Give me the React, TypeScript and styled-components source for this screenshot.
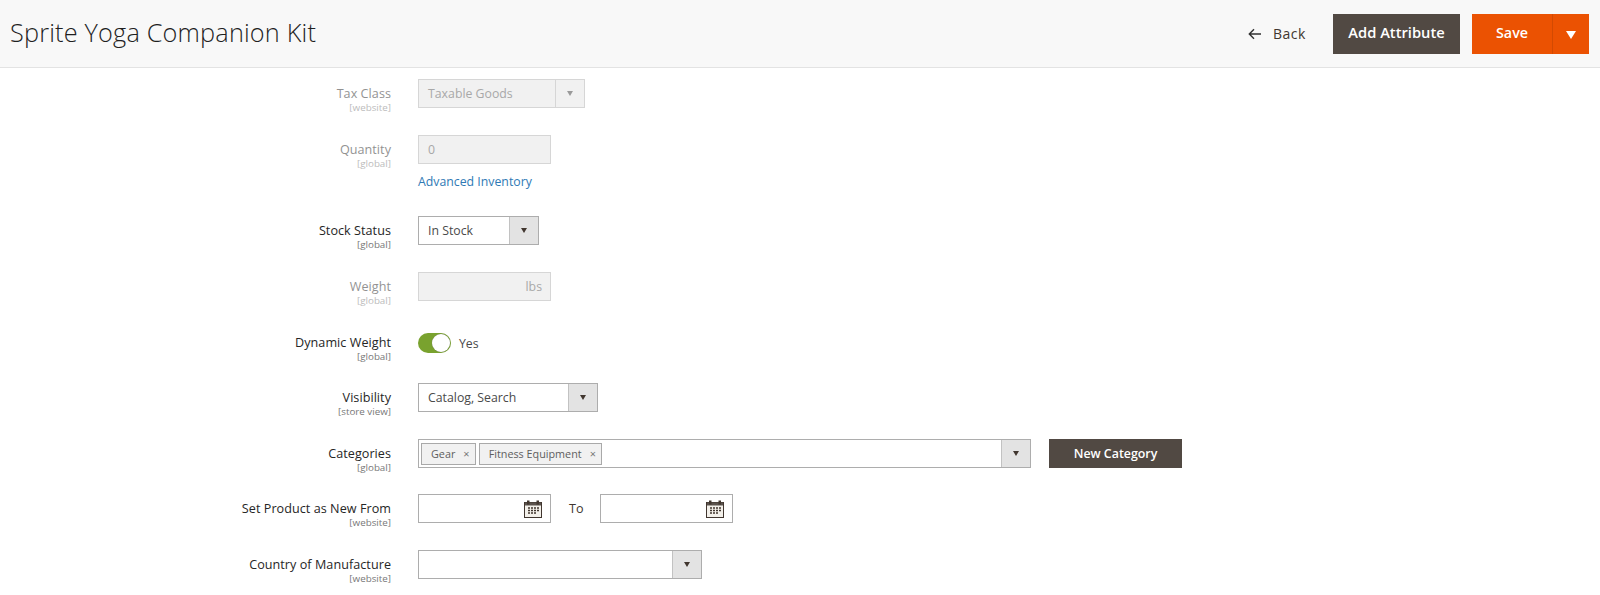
import React from "react";
import styled, { createGlobalStyle } from "styled-components";

const Global = createGlobalStyle`
  html, body { margin: 0; padding: 0; background: #fff; overflow: hidden; }
  body { font-family: "Open Sans", "Liberation Sans", sans-serif; color: #303030; }
`;

const Page = styled.div`
  width: 1600px;
  height: 595px;
  overflow: hidden;
`;

const Header = styled.header`
  box-sizing: border-box;
  background: #f8f8f8;
  border-bottom: 1px solid #e3e3e3;
  display: flex;
  align-items: center;
  padding: 0 11px 0 10px;
  height: 68px;
`;

const Title = styled.h1`
  margin: 0;
  flex: 1;
  font-size: 25.3px;
  font-weight: 300;
  color: #1f1f1f;
  letter-spacing: 0.17px;
  position: relative;
  top: -2px;
`;

const BackLink = styled.span`
  display: flex;
  align-items: center;
  gap: 11px;
  font-size: 14px;
  font-weight: 400;
  letter-spacing: 0.55px;
  color: #41362f;
  margin-right: 27px;
  padding-left: 1px;
`;

const DarkButton = styled.button<{ $w: number; $h: number; $lift?: number }>`
  width: ${(p) => p.$w}px;
  height: ${(p) => p.$h}px;
  background: #514943;
  border: 1px solid #514943;
  color: #fff;
  font-family: inherit;
  font-weight: 600;
  font-size: 14.7px;
  padding: 0 0 ${(p) => p.$lift ?? 0}px;
`;

const SaveGroup = styled.div`
  display: flex;
  height: 40px;
  margin-left: 12px;
  background: #eb5202;
`;

const SaveMain = styled.button`
  width: 80px;
  border: 0;
  background: none;
  color: #fff;
  font-family: inherit;
  font-weight: 600;
  font-size: 14.3px;
  padding: 0 0 2px;
`;

const SaveToggle = styled.button`
  width: 37px;
  border: 0;
  border-left: 1px solid #d24a02;
  background: none;
  padding: 0;
  display: flex;
  align-items: center;
  justify-content: center;
`;

const Form = styled.main`
  padding-top: 11px;
  display: flex;
  flex-direction: column;
`;

const Row = styled.div<{ $gap?: number }>`
  display: grid;
  grid-template-columns: 391px 1fr;
  column-gap: 27px;
  margin-bottom: ${(p) => p.$gap ?? 27}px;
  height: 29px;
`;

const LabelCell = styled.div<{ $disabled?: boolean }>`
  text-align: right;
  opacity: ${(p) => (p.$disabled ? 0.5 : 1)};
  padding-top: 6px;
`;

const LabelText = styled.div`
  font-size: 12.6px;
  font-weight: 400;
  letter-spacing: 0.05px;
  line-height: 17px;
  color: #262626;
`;

const Scope = styled.div`
  font-size: 9.8px;
  line-height: 11px;
  color: #777;
`;

const Control = styled.div`
  display: flex;
  align-items: flex-start;
`;

const Stack = styled.div`
  display: flex;
  flex-direction: column;
`;

const SelectBox = styled.div<{ $w: number; $disabled?: boolean }>`
  width: ${(p) => p.$w}px;
  height: 29px;
  box-sizing: border-box;
  display: flex;
  border: 1px solid ${(p) => (p.$disabled ? "#d6d6d6" : "#adadad")};
  background: ${(p) => (p.$disabled ? "#f1f1f1" : "#fff")};
`;

const SelectValue = styled.div<{ $disabled?: boolean }>`
  flex: 1;
  padding-left: 9px;
  font-size: 12.3px;
  line-height: 27px;
  color: ${(p) => (p.$disabled ? "#a8a8a8" : "#4a4a4a")};
`;

const SelectArrow = styled.div<{ $disabled?: boolean }>`
  width: 28px;
  flex: none;
  display: flex;
  align-items: center;
  justify-content: center;
  background: ${(p) => (p.$disabled ? "#f1f1f1" : "#e3e3e3")};
  border-left: 1px solid ${(p) => (p.$disabled ? "#d6d6d6" : "#c2c2c2")};
`;

const Caret = styled.span<{ $disabled?: boolean }>`
  width: 0;
  height: 0;
  border-left: 3.5px solid transparent;
  border-right: 3.5px solid transparent;
  border-top: 5px solid ${(p) => (p.$disabled ? "#9a9a9a" : "#41362f")};
`;

const SaveCaret = styled.span`
  width: 0;
  height: 0;
  border-left: 5.5px solid transparent;
  border-right: 5.5px solid transparent;
  border-top: 8px solid #fff;
  margin-top: 3px;
`;

const TextBox = styled.div<{ $disabled?: boolean }>`
  width: 133px;
  height: 29px;
  box-sizing: border-box;
  display: flex;
  align-items: center;
  justify-content: space-between;
  padding: 0 8px 0 9px;
  border: 1px solid ${(p) => (p.$disabled ? "#d6d6d6" : "#adadad")};
  background: ${(p) => (p.$disabled ? "#f1f1f1" : "#fff")};
  font-size: 12.3px;
  color: #a8a8a8;
`;

const AddLink = styled.a`
  font-size: 12.3px;
  color: #2f7ab5;
  line-height: 18px;
  margin-top: 9px;
`;

const Toggle = styled.div`
  margin-top: 5px;
  display: flex;
  align-items: center;
  gap: 8px;
  font-size: 12.3px;
  color: #4a4a4a;
`;

const Track = styled.div`
  width: 33px;
  height: 20px;
  border-radius: 10px;
  background: #79a22e;
  display: flex;
  justify-content: flex-end;
`;

const Knob = styled.div`
  width: 18px;
  height: 18px;
  margin: 1px;
  border-radius: 50%;
  background: #fff;
  box-shadow: 0 0 1px #777;
`;

const MultiWrap = styled.div`
  width: 613px;
  height: 29px;
  box-sizing: border-box;
  display: flex;
  border: 1px solid #adadad;
  background: #fff;
`;

const Chips = styled.div`
  flex: 1;
  display: flex;
  align-items: center;
  gap: 3px;
  padding-left: 2px;
`;

const Chip = styled.span`
  height: 22px;
  box-sizing: border-box;
  display: inline-flex;
  align-items: center;
  justify-content: space-between;
  gap: 8px;
  padding: 0 5px 0 9px;
  background: #f1f1f1;
  border: 1px solid #a9a9a9;
  font-size: 10.8px;
  color: #5e5e5e;
`;

const ChipClose = styled.span`
  font-size: 11px;
  color: #777;
  line-height: 1;
`;

const NewButton = styled(DarkButton)`
  margin-left: 18px;
  font-size: 12.4px;
`;

const ToLabel = styled.span`
  font-size: 12.6px;
  line-height: 29px;
  color: #41362f;
  margin: 0 16px 0 18px;
`;

const CalendarIcon = () => (
  <svg width="18" height="18" viewBox="0 0 18 18">
    <rect x="0.5" y="2.5" width="17" height="15" fill="#f3f0ea" stroke="#41362f" />
    <rect x="1" y="2.5" width="16" height="3" fill="#5a524c" />
    <rect x="3" y="0.5" width="2.5" height="4" fill="#41362f" />
    <rect x="12.5" y="0.5" width="2.5" height="4" fill="#41362f" />
    <path
      d="M4 8h2M7 8h2M10 8h2M13 8h2M4 10.5h2M7 10.5h2M10 10.5h2M13 10.5h2M4 13h2M7 13h2M10 13h2"
      stroke="#41362f"
      strokeWidth="1.3"
    />
  </svg>
);

const BackArrow = () => (
  <svg width="14" height="12" viewBox="0 0 14 12" fill="none" stroke="#303030" strokeWidth="1.4">
    <path d="M13 6H1.5M6 1.3 1.3 6 6 10.7" />
  </svg>
);

type FieldProps = { label: string; scope: string; disabled?: boolean; gap?: number; children: React.ReactNode };

const Field = ({ label, scope, disabled, gap, children }: FieldProps) => (
  <Row $gap={gap}>
    <LabelCell $disabled={disabled}>
      <LabelText>{label}</LabelText>
      <Scope>{scope}</Scope>
    </LabelCell>
    <Control>{children}</Control>
  </Row>
);

const Select = ({ w, value, disabled }: { w: number; value: string; disabled?: boolean }) => (
  <SelectBox $w={w} $disabled={disabled}>
    <SelectValue $disabled={disabled}>{value}</SelectValue>
    <SelectArrow $disabled={disabled}>
      <Caret $disabled={disabled} />
    </SelectArrow>
  </SelectBox>
);

export default function App() {
  return (
    <Page>
      <Global />
      <Header>
        <Title>Sprite Yoga Companion Kit</Title>
        <BackLink>
          <BackArrow />
          Back
        </BackLink>
        <DarkButton $w={127} $h={40} $lift={3}>Add Attribute</DarkButton>
        <SaveGroup>
          <SaveMain>Save</SaveMain>
          <SaveToggle>
            <SaveCaret />
          </SaveToggle>
        </SaveGroup>
      </Header>
      <Form>
        <Field label="Tax Class" scope="[website]" disabled gap={27}>
          <Select w={167} value="Taxable Goods" disabled />
        </Field>
        <Field label="Quantity" scope="[global]" disabled gap={52}>
          <Stack>
            <TextBox $disabled>0</TextBox>
            <AddLink>Advanced Inventory</AddLink>
          </Stack>
        </Field>
        <Field label="Stock Status" scope="[global]">
          <Select w={121} value="In Stock" />
        </Field>
        <Field label="Weight" scope="[global]" disabled>
          <TextBox $disabled>
            <span />
            lbs
          </TextBox>
        </Field>
        <Field label="Dynamic Weight" scope="[global]" gap={26}>
          <Toggle>
            <Track>
              <Knob />
            </Track>
            Yes
          </Toggle>
        </Field>
        <Field label="Visibility" scope="[store view]">
          <Select w={180} value="Catalog, Search" />
        </Field>
        <Field label="Categories" scope="[global]" gap={26}>
          <MultiWrap>
            <Chips>
              <Chip>
                Gear <ChipClose>×</ChipClose>
              </Chip>
              <Chip>
                Fitness Equipment <ChipClose>×</ChipClose>
              </Chip>
            </Chips>
            <SelectArrow>
              <Caret />
            </SelectArrow>
          </MultiWrap>
          <NewButton $w={133} $h={29}>New Category</NewButton>
        </Field>
        <Field label="Set Product as New From" scope="[website]">
          <TextBox>
            <span />
            <CalendarIcon />
          </TextBox>
          <ToLabel>To</ToLabel>
          <TextBox>
            <span />
            <CalendarIcon />
          </TextBox>
        </Field>
        <Field label="Country of Manufacture" scope="[website]">
          <Select w={284} value="" />
        </Field>
      </Form>
    </Page>
  );
}
